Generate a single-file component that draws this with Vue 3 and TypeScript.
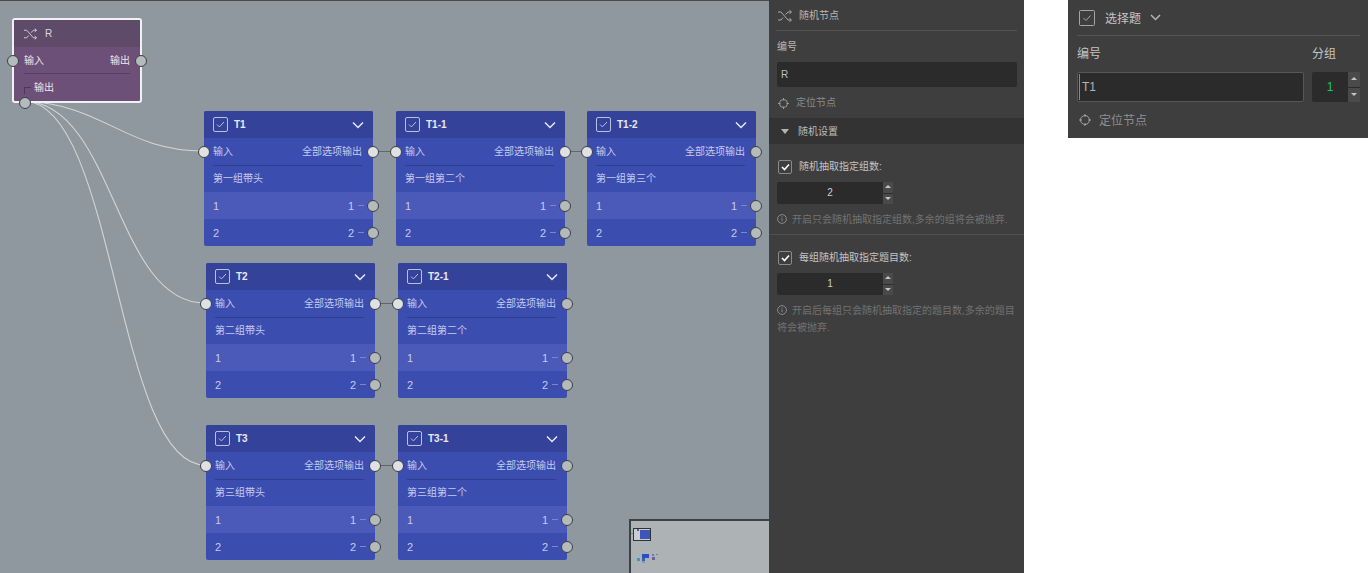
<script setup lang="ts">
interface FlowNode {
  id: string
  title: string
  x: number
  y: number
  out: boolean
}

const nodes: FlowNode[] = [
  { id: 'T1', title: '第一组带头', x: 204, y: 111, out: true },
  { id: 'T1-1', title: '第一组第二个', x: 396, y: 111, out: true },
  { id: 'T1-2', title: '第一组第三个', x: 587, y: 111, out: false },
  { id: 'T2', title: '第二组带头', x: 206, y: 263, out: true },
  { id: 'T2-1', title: '第二组第二个', x: 398, y: 263, out: false },
  { id: 'T3', title: '第三组带头', x: 206, y: 425, out: true },
  { id: 'T3-1', title: '第三组第二个', x: 398, y: 425, out: false },
]

const options = ['1', '2']

// 随机节点出来的连线
const curves = [
  'M25 101 C 105 105, 125 151, 204 151',
  'M25 101 C 115 105, 115 303, 205 303',
  'M25 101 C 116 105, 116 465, 205 465',
]

// 节点之间的短连线
const links = [
  'M373 151.5 L396 151.5',
  'M565 151.5 L587 151.5',
  'M375 303.5 L398 303.5',
  'M375 465.5 L398 465.5',
]
</script>

<template>
  <div class="page">
    <div class="canvas">
      <svg class="edges" width="769" height="573" viewBox="0 0 769 573" fill="none">
        <path v-for="d in curves" :key="d" :d="d" stroke="#d3d6d6" stroke-width="1.1" />
        <path v-for="d in links" :key="d" :d="d" stroke="#5f656b" stroke-width="1" />
      </svg>

      <div class="node random-node">
        <div class="node-head">
          <svg class="shuffle" width="15" height="14" viewBox="0 0 16 14" fill="none" stroke="#d6cfda" stroke-width="1">
            <path d="M1 3h3l7 8h3M1 11h3l2-2.4M8.5 5.6L11 3h3M12.5 1.3L14.5 3l-2 1.7M12.5 9.3l2 1.7-2 1.7" />
          </svg>
          <span class="head-id">R</span>
        </div>
        <div class="node-ports">
          <span>输入</span>
          <span>输出</span>
          <i class="port left-port"></i>
          <i class="port right-port"></i>
        </div>
        <div class="random-out">
          <i class="corner"></i>
          <span>输出</span>
        </div>
        <i class="port bottom-port"></i>
      </div>

      <div
        v-for="n in nodes"
        :key="n.id"
        class="node task-node"
        :style="{ left: n.x + 'px', top: n.y + 'px' }"
      >
        <div class="task-head">
          <svg width="15" height="15" viewBox="0 0 15 15" fill="none" stroke="#b9c0e6">
            <rect x="0.5" y="0.5" width="14" height="14" rx="1.5" />
            <path d="M4 7.5l2.4 2.4L11 5" />
          </svg>
          <span class="head-id">{{ n.id }}</span>
          <svg class="chevron" width="12" height="8" viewBox="0 0 12 8" fill="none" stroke="#e6e9f7" stroke-width="1.5">
            <path d="M1 1.5l5 5 5-5" />
          </svg>
        </div>
        <div class="task-body">
          <div class="task-ports">
            <span>输入</span>
            <span>全部选项输出</span>
            <i class="port light left-port"></i>
            <i class="port right-port" :class="{ light: n.out }"></i>
          </div>
          <div class="task-title">{{ n.title }}</div>
        </div>
        <div v-for="o in options" :key="o" class="option">
          <span class="digit">{{ o }}</span>
          <span class="option-right"><span class="digit">{{ o }}</span><b class="dash"></b></span>
          <i class="port right-port"></i>
        </div>
      </div>

      <div class="minimap">
        <div class="mini-view">
          <i class="mini-purple"></i>
          <span class="mini-grid"></span>
        </div>
        <i class="mini m1"></i><i class="mini m2"></i><i class="mini d1"></i><i class="mini d2"></i>
        <i class="mini d3"></i><i class="mini d4"></i><i class="mini d5"></i><i class="mini d6"></i>
        <i class="mini d7"></i>
      </div>
    </div>

    <aside class="panel">
      <div class="panel-head">
        <svg width="16" height="14" viewBox="0 0 16 14" fill="none" stroke="#aaa" stroke-width="1">
          <path d="M1 3h3l7 8h3M1 11h3l2-2.4M8.5 5.6L11 3h3M12.5 1.3L14.5 3l-2 1.7M12.5 9.3l2 1.7-2 1.7" />
        </svg>
        <span>随机节点</span>
      </div>
      <div class="panel-block">
        <label class="field-label">编号</label>
        <div class="text-input">R</div>
        <div class="locate">
          <svg width="11" height="11" viewBox="0 0 11 11" fill="none" stroke="#999">
            <circle cx="5.5" cy="5.5" r="4" />
            <path d="M5.5 0v2.5M5.5 8.5V11M0 5.5h2.5M8.5 5.5H11" />
          </svg>
          <span>定位节点</span>
        </div>
      </div>
      <div class="section-head">
        <i class="triangle"></i>
        <span>随机设置</span>
      </div>
      <div class="setting first">
        <div class="check-row">
          <span class="check">
            <svg width="9" height="8" viewBox="0 0 9 8" fill="none" stroke="#fff" stroke-width="1.6"><path d="M1 4l2.5 2.5L8 1.5" /></svg>
          </span>
          <span>随机抽取指定组数:</span>
        </div>
        <div class="num-input">
          <span class="num-value">2</span>
          <span class="spin"><i class="up"></i><i class="down"></i></span>
        </div>
        <p class="hint">
          <svg class="info" width="10" height="10" viewBox="0 0 10 10" fill="none" stroke="#8a8a8a">
            <circle cx="5" cy="5" r="4.4" />
            <path d="M5 4.2v3M5 2.4v1" />
          </svg>开启只会随机抽取指定组数,多余的组将会被抛弃.
        </p>
      </div>
      <div class="setting">
        <div class="check-row">
          <span class="check">
            <svg width="9" height="8" viewBox="0 0 9 8" fill="none" stroke="#fff" stroke-width="1.6"><path d="M1 4l2.5 2.5L8 1.5" /></svg>
          </span>
          <span>每组随机抽取指定题目数:</span>
        </div>
        <div class="num-input">
          <span class="num-value">1</span>
          <span class="spin"><i class="up"></i><i class="down"></i></span>
        </div>
        <p class="hint">
          <svg class="info" width="10" height="10" viewBox="0 0 10 10" fill="none" stroke="#8a8a8a">
            <circle cx="5" cy="5" r="4.4" />
            <path d="M5 4.2v3M5 2.4v1" />
          </svg>开启后每组只会随机抽取指定的题目数,多余的题目将会被抛弃.
        </p>
      </div>
    </aside>

    <aside class="side-card">
      <div class="card-head">
        <svg width="16" height="16" viewBox="0 0 16 16" fill="none" stroke="#a5a5a5">
          <rect x="0.5" y="0.5" width="15" height="15" rx="1" />
          <path d="M4.5 8l2.5 2.5L11.5 5.5" />
        </svg>
        <span>选择题</span>
        <svg width="11" height="7" viewBox="0 0 11 7" fill="none" stroke="#b5b5b5" stroke-width="1.5">
          <path d="M1 1l4.5 4.5L10 1" />
        </svg>
      </div>
      <div class="card-fields">
        <div class="card-col grow">
          <label>编号</label>
          <div class="card-input"><i class="caret"></i>T1</div>
        </div>
        <div class="card-col">
          <label>分组</label>
          <div class="card-num">
            <span class="green">1</span>
            <span class="spin big"><i class="up"></i><i class="down"></i></span>
          </div>
        </div>
      </div>
      <div class="card-locate">
        <svg width="12" height="12" viewBox="0 0 12 12" fill="none" stroke="#a0a0a0">
          <circle cx="6" cy="6" r="4.5" />
          <path d="M6 0v3M6 9v3M0 6h3M9 6h3" />
        </svg>
        <span>定位节点</span>
      </div>
    </aside>
  </div>
</template>

<style>
html,
body {
  margin: 0;
  background: #fff;
}
</style>

<style scoped>
.page {
  display: flex;
  align-items: flex-start;
  width: 1368px;
  height: 573px;
  overflow: hidden;
  font-family: "Liberation Sans", "Noto Sans CJK SC", sans-serif;
}

.canvas {
  position: relative;
  flex: 0 0 769px;
  height: 573px;
  box-shadow: inset 0 1px 0 #4a4d50;
  background: #8f989f;
  overflow: hidden;
}

.edges {
  position: absolute;
  left: 0;
  top: 0;
}

.node {
  position: absolute;
  font-size: 10px;
  line-height: 14px;
}

.random-node {
  left: 12px;
  top: 18px;
  width: 126px;
  height: 81px;
  border: 2px solid #f1f1f3;
  border-radius: 3px;
  background: #6c5078;
  color: #eee6f0;
}

.node-head {
  display: flex;
  align-items: center;
  gap: 7px;
  height: 27px;
  padding: 0 9px;
  background: #5e4a69;
  color: #ddd5e2;
}

.head-id {
  font-size: 10px;
  font-weight: 700;
}

.random-node .head-id {
  font-weight: 400;
}

.node-ports {
  position: relative;
  display: flex;
  justify-content: space-between;
  align-items: center;
  height: 24px;
  padding-top: 2px;
  margin: 0 10px 0 10px;
  border-bottom: 1px solid #554063;
}

.left-port {
  left: -15px;
  top: 50%;
  margin-top: -6px;
}

.node-ports .port {
  margin-top: -5px;
}

.random-node .left-port {
  left: -17px;
}

.random-node .right-port {
  right: -17px;
}

.random-out {
  display: flex;
  align-items: center;
  gap: 3px;
  height: 24px;
  padding-top: 2px;
  margin-left: 10px;
}

.corner {
  width: 6px;
  height: 6px;
  margin-top: 5px;
  border-top: 1px solid #4a3a55;
  border-left: 1px solid #4a3a55;
}

.port {
  position: absolute;
  z-index: 2;
  display: block;
  width: 12px;
  height: 12px;
  box-sizing: border-box;
  border: 1.5px solid #3a4048;
  border-radius: 50%;
  background: #b5babb;
}

.port.light {
  background: #dfe1e2;
}

.right-port {
  right: -17px;
  top: 50%;
  margin-top: -6px;
}

.bottom-port {
  left: 5px;
  bottom: -8px;
}

.task-node {
  width: 169px;
  height: 135px;
  border-radius: 2px;
  background: #3c4db0;
  color: #c5cbee;
}

.task-head {
  display: flex;
  align-items: center;
  gap: 6px;
  height: 27px;
  padding: 0 9px;
  border-radius: 2px 2px 0 0;
  background: #35429a;
  color: #e6e9f7;
}

.chevron {
  margin-left: auto;
}

.task-body {
  height: 54px;
  padding: 0 11px 0 9px;
}

.task-ports {
  position: relative;
  display: flex;
  justify-content: space-between;
  align-items: center;
  height: 27px;
  border-bottom: 1px solid #303d8f;
}

.task-title {
  display: flex;
  align-items: center;
  height: 26px;
}

.option {
  position: relative;
  display: flex;
  justify-content: space-between;
  align-items: center;
  height: 27px;
  padding: 0 9px;
}

.option:nth-of-type(3) {
  background: #4b5ab8;
}

.option > .right-port {
  right: -6px;
}

.digit {
  font-size: 11px;
}

.option-right {
  display: flex;
  align-items: center;
  gap: 4px;
}

.dash {
  width: 6px;
  height: 1px;
  background: #7885cf;
}

.minimap {
  position: absolute;
  right: 0;
  bottom: 0;
  width: 138px;
  height: 52px;
  border-top: 2px solid #3e4144;
  border-left: 2px solid #3e4144;
  background: #adb2b5;
}

.mini-view {
  position: relative;
  box-sizing: border-box;
  width: 18px;
  height: 13px;
  margin: 7px 0 0 2px;
  border: 1px solid #2f3236;
  background: #c9cdd0;
}

.mini-purple {
  position: absolute;
  left: 3px;
  top: 0;
  width: 2px;
  height: 2px;
  background: #6a5a80;
}

.mini-grid {
  position: absolute;
  left: 6px;
  top: 1px;
  width: 10px;
  height: 9px;
  background: #3c55b8;
}

.mini {
  position: absolute;
  display: block;
}

.m1 { left: 0; top: 9px; width: 2px; height: 2px; background: #5fd0a8; }
.m2 { left: 0; top: 12px; width: 2px; height: 1px; background: #d06070; }
.d1 { left: 11px; top: 33px; width: 7px; height: 4px; background: #2a50c0; }
.d2 { left: 6px; top: 37px; width: 3px; height: 3px; background: #2c9fc4; }
.d3 { left: 11px; top: 37px; width: 3px; height: 3px; background: #3062b8; }
.d4 { left: 11px; top: 40px; width: 3px; height: 2px; background: #8a96b0; }
.d5 { left: 21px; top: 33px; width: 2px; height: 2px; background: #7b78a8; }
.d6 { left: 25px; top: 33px; width: 2px; height: 1px; background: #d06070; }
.d7 { left: 21px; top: 36px; width: 3px; height: 3px; background: #6c62a0; }

.panel {
  flex: 0 0 255px;
  height: 573px;
  background: #3e3e3e;
  color: #b8b8b8;
  font-size: 10px;
  line-height: 14px;
}

.panel-head {
  display: flex;
  align-items: center;
  gap: 6px;
  height: 29px;
  padding: 1px 0 0 1px;
  margin: 0 7px;
  border-bottom: 1px solid #525252;
}

.panel-block {
  padding: 9px 7px 0 8px;
  height: 87px;
  box-sizing: border-box;
}

.field-label {
  display: block;
}

.text-input {
  height: 25px;
  margin-top: 8px;
  padding-left: 4px;
  border-radius: 2px;
  background: #2b2b2b;
  color: #bcbcbc;
  line-height: 25px;
}

.locate {
  display: flex;
  align-items: center;
  gap: 7px;
  margin-top: 9px;
  padding-left: 1px;
  color: #8a8a8a;
}

.section-head {
  display: flex;
  align-items: center;
  gap: 9px;
  height: 25px;
  padding: 1px 0 0 12px;
  background: #333;
  color: #bbb;
}

.triangle {
  width: 0;
  height: 0;
  border-left: 4px solid transparent;
  border-right: 4px solid transparent;
  border-top: 5px solid #b5b5b5;
}

.setting {
  padding: 16px 7px 0 8px;
}

.setting.first {
  height: 91px;
  box-sizing: border-box;
  border-bottom: 1px solid #505050;
}

.check-row {
  display: flex;
  align-items: center;
  gap: 7px;
  height: 14px;
  padding-left: 1px;
  color: #c4c4c4;
}

.check {
  display: flex;
  align-items: center;
  justify-content: center;
  width: 12px;
  height: 12px;
  border: 1px solid #8a8a8a;
  border-radius: 2px;
}

.num-input {
  display: flex;
  width: 116px;
  height: 22px;
  margin-top: 8px;
  border-radius: 2px;
  background: #2b2b2b;
  color: #d0d0d0;
}

.num-value {
  flex: 1;
  text-align: center;
  line-height: 22px;
}

.spin {
  display: flex;
  flex-direction: column;
  gap: 1px;
  width: 10px;
  flex: none;
}

.spin i {
  position: relative;
  display: block;
  flex: 1;
  background: #4a4a4a;
}

.spin i::after {
  content: "";
  position: absolute;
  left: 50%;
  top: 50%;
  margin: -2px 0 0 -3px;
  border-left: 3px solid transparent;
  border-right: 3px solid transparent;
}

.spin .up::after {
  border-bottom: 3px solid #c5c5c5;
}

.spin .down::after {
  border-top: 3px solid #c5c5c5;
}

.hint {
  margin: 7px 0 0;
  color: #727272;
  line-height: 17px;
}

.info {
  margin-right: 5px;
  vertical-align: -1px;
}

.side-card {
  flex: 0 0 300px;
  height: 138px;
  margin-left: 44px;
  box-sizing: border-box;
  padding: 0 8px 0 9px;
  background: #3e3e3e;
  color: #b5b5b5;
  font-size: 12px;
}

.card-head {
  display: flex;
  align-items: center;
  height: 35px;
  padding-left: 2px;
  border-bottom: 1px solid #555;
}

.card-head span {
  margin: 0 9px 0 10px;
  color: #c5c5c5;
}

.card-fields {
  display: flex;
  gap: 8px;
  margin-top: 11px;
}

.card-col {
  width: 48px;
}

.card-col.grow {
  width: 227px;
}

.card-col label {
  display: block;
  height: 14px;
  margin-bottom: 11px;
  line-height: 14px;
  color: #c5c5c5;
}

.card-input {
  position: relative;
  box-sizing: border-box;
  height: 30px;
  padding-left: 4px;
  border: 1px solid #575757;
  border-radius: 2px;
  background: #2b2b2b;
  line-height: 28px;
}

.caret {
  position: absolute;
  left: 1px;
  top: 1px;
  width: 1px;
  height: 26px;
  background: #22c472;
}

.card-num {
  display: flex;
  height: 30px;
  border-radius: 2px;
  background: #2b2b2b;
}

.green {
  flex: 1;
  color: #1fc567;
  text-align: center;
  line-height: 30px;
}

.spin.big {
  width: 12px;
}

.card-locate {
  display: flex;
  align-items: center;
  gap: 8px;
  margin-top: 9px;
  padding-left: 2px;
  color: #8f8f8f;
}
</style>
